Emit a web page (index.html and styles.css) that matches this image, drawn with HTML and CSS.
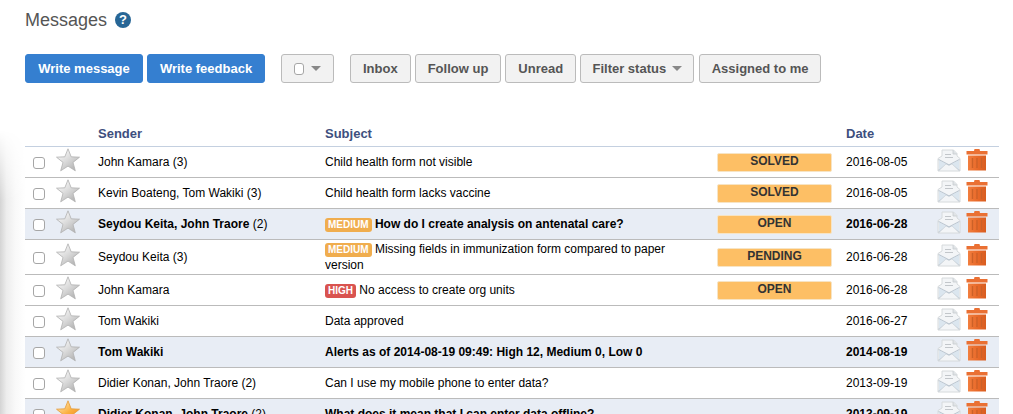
FILE: index.html
```html
<!DOCTYPE html>
<html lang="en">
<head>
  <meta charset="UTF-8" />
  <title>Messages</title>
  <link rel="stylesheet" href="styles.css">
</head>
<body>
  <svg class="defs" width="0" height="0">
    <defs>
      <linearGradient id="silver" x1="0.15" y1="0.1" x2="0.85" y2="0.95">
        <stop offset="0" stop-color="#fafafa"/>
        <stop offset="0.5" stop-color="#d8d8d8"/>
        <stop offset="1" stop-color="#b0b0b0"/>
      </linearGradient>
      <linearGradient id="gold" x1="0.15" y1="0.1" x2="0.85" y2="0.95">
        <stop offset="0" stop-color="#ffe2a8"/>
        <stop offset="0.5" stop-color="#fbb040"/>
        <stop offset="1" stop-color="#ee8a1c"/>
      </linearGradient>
      <linearGradient id="bin" x1="0" y1="0" x2="1" y2="0">
        <stop offset="0" stop-color="#f27f3f"/>
        <stop offset="0.5" stop-color="#e96a2a"/>
        <stop offset="1" stop-color="#d85d20"/>
      </linearGradient>
      <symbol id="star" viewBox="0 0 24 24">
        <path d="M12 .8l3.2 8 8.3.4-6.5 5.2 2.3 8.4L12 18.100l-7.300 4.700 2.300-8.400L.5 9.200l8.300-.4z"/>
      </symbol>
      <symbol id="mail" viewBox="0 0 24 23">
        <path d="M1 9.500L5 7V1h11.500L20 4.500V7l3 2.500V22H1z" fill="#f3f5f7" stroke="#d6dadc"/>
        <path d="M16 1v4h4" fill="#dfe3e6" stroke="#c6cbcf" stroke-width=".8"/>
        <path d="M8 5.500h6M8 8.500h8" stroke="#c2c6ca" stroke-width="1" fill="none"/>
        <path d="M1.500 10.500L12 16l10.500-5.500" fill="none" stroke="#bcc6cf" stroke-width="1.200"/>
        <path d="M1.500 21.500L9 14.200M22.500 21.500L15 14.200" fill="none" stroke="#c4ccd3" stroke-width="1.200"/>
        <path d="M2 11.200L9 14.700 2 20.800zM22 11.200L15 14.700l7 6.100z" fill="#dbe6ef"/>
      </symbol>
      <symbol id="trash" viewBox="0 0 22 22">
        <path d="M8.500 0h5l.5 2h7.500v3.500H.5V2H8z" fill="#ea7033"/>
        <path d="M2 6.500h18V21.500H2z" fill="url(#bin)"/>
        <path d="M6.500 9v10M11 9v10M15.500 9v10" stroke="#cc6128" stroke-width="1.400" fill="none"/>
      </symbol>
    </defs>
  </svg>

  <div class="side-shadow"></div>

  <div class="page">
    <h1 class="title">Messages <span class="help">?</span></h1>

    <div class="toolbar">
      <button class="btn btn-primary">Write message</button>
      <button class="btn btn-primary">Write feedback</button>
      <button class="btn btn-select"><span class="fake-check"></span><span class="caret"></span></button>
      <button class="btn">Inbox</button>
      <button class="btn">Follow up</button>
      <button class="btn">Unread</button>
      <button class="btn btn-filter">Filter status <span class="caret"></span></button>
      <button class="btn btn-last">Assigned to me</button>
    </div>

    <table class="messages">
      <colgroup>
        <col class="col-check"><col class="col-star"><col class="col-sender"><col class="col-subject"><col class="col-status"><col class="col-date"><col class="col-actions">
      </colgroup>
      <thead>
        <tr><th></th><th></th><th>Sender</th><th>Subject</th><th></th><th>Date</th><th></th></tr>
      </thead>
      <tbody>
        <tr>
          <td><span class="fake-check"></span></td>
          <td><svg class="star"><use href="#star"/></svg></td>
          <td>John Kamara (3)</td>
          <td>Child health form not visible</td>
          <td><div class="status">SOLVED</div></td>
          <td>2016-08-05</td>
          <td><div class="actions"><svg class="mail"><use href="#mail"/></svg><svg class="trash"><use href="#trash"/></svg></div></td>
        </tr>
        <tr>
          <td><span class="fake-check"></span></td>
          <td><svg class="star"><use href="#star"/></svg></td>
          <td>Kevin Boateng, Tom Wakiki (3)</td>
          <td>Child health form lacks vaccine</td>
          <td><div class="status">SOLVED</div></td>
          <td>2016-08-05</td>
          <td><div class="actions"><svg class="mail"><use href="#mail"/></svg><svg class="trash"><use href="#trash"/></svg></div></td>
        </tr>
        <tr class="unread">
          <td><span class="fake-check"></span></td>
          <td><svg class="star"><use href="#star"/></svg></td>
          <td><b>Seydou Keita, John Traore</b> (2)</td>
          <td><span class="prio prio-medium">MEDIUM</span> <b>How do I create analysis on antenatal care?</b></td>
          <td><div class="status">OPEN</div></td>
          <td><b>2016-06-28</b></td>
          <td><div class="actions"><svg class="mail"><use href="#mail"/></svg><svg class="trash"><use href="#trash"/></svg></div></td>
        </tr>
        <tr>
          <td><span class="fake-check"></span></td>
          <td><svg class="star"><use href="#star"/></svg></td>
          <td>Seydou Keita (3)</td>
          <td><span class="prio prio-medium">MEDIUM</span> Missing fields in immunization form compared to paper version</td>
          <td><div class="status">PENDING</div></td>
          <td>2016-06-28</td>
          <td><div class="actions"><svg class="mail"><use href="#mail"/></svg><svg class="trash"><use href="#trash"/></svg></div></td>
        </tr>
        <tr>
          <td><span class="fake-check"></span></td>
          <td><svg class="star"><use href="#star"/></svg></td>
          <td>John Kamara</td>
          <td><span class="prio prio-high">HIGH</span> No access to create org units</td>
          <td><div class="status">OPEN</div></td>
          <td>2016-06-28</td>
          <td><div class="actions"><svg class="mail"><use href="#mail"/></svg><svg class="trash"><use href="#trash"/></svg></div></td>
        </tr>
        <tr>
          <td><span class="fake-check"></span></td>
          <td><svg class="star"><use href="#star"/></svg></td>
          <td>Tom Wakiki</td>
          <td>Data approved</td>
          <td></td>
          <td>2016-06-27</td>
          <td><div class="actions"><svg class="mail"><use href="#mail"/></svg><svg class="trash"><use href="#trash"/></svg></div></td>
        </tr>
        <tr class="unread">
          <td><span class="fake-check"></span></td>
          <td><svg class="star"><use href="#star"/></svg></td>
          <td><b>Tom Wakiki</b></td>
          <td><b>Alerts as of 2014-08-19 09:49: High 12, Medium 0, Low 0</b></td>
          <td></td>
          <td><b>2014-08-19</b></td>
          <td><div class="actions"><svg class="mail"><use href="#mail"/></svg><svg class="trash"><use href="#trash"/></svg></div></td>
        </tr>
        <tr>
          <td><span class="fake-check"></span></td>
          <td><svg class="star"><use href="#star"/></svg></td>
          <td>Didier Konan, John Traore (2)</td>
          <td>Can I use my mobile phone to enter data?</td>
          <td></td>
          <td>2013-09-19</td>
          <td><div class="actions"><svg class="mail"><use href="#mail"/></svg><svg class="trash"><use href="#trash"/></svg></div></td>
        </tr>
        <tr class="unread">
          <td><span class="fake-check"></span></td>
          <td><svg class="star star-on"><use href="#star"/></svg></td>
          <td><b>Didier Konan, John Traore</b> (2)</td>
          <td><b>What does it mean that I can enter data offline?</b></td>
          <td></td>
          <td><b>2013-09-19</b></td>
          <td><div class="actions"><svg class="mail"><use href="#mail"/></svg><svg class="trash"><use href="#trash"/></svg></div></td>
        </tr>
      </tbody>
    </table>
  </div>
</body>
</html>
```

FILE: styles.css
```css
html, body {
  margin: 0;
  height: 414px;
  overflow: hidden;
}
body {
  position: relative;
  font-family: "Liberation Sans", Arial, sans-serif;
  font-size: 12px;
  color: #000;
  background-color: #fff;
}
.defs {
  display: block;
}
.side-shadow {
  position: absolute;
  left: 0;
  top: 130px;
  bottom: 0;
  width: 26px;
  background: linear-gradient(to right, #d4d4d4, #ededed 25%, #f9f9f9 60%, #fff);
  -webkit-mask-image: linear-gradient(to bottom, transparent, #000 70px);
  mask-image: linear-gradient(to bottom, transparent, #000 70px);
  pointer-events: none;
}
.page {
  position: relative;
  padding: 10px 14px 0 25px;
}
.title {
  display: flex;
  align-items: center;
  gap: 8px;
  margin: 0;
  height: 20px;
  font-size: 18px;
  font-weight: normal;
  color: #555;
}
.help {
  display: inline-block;
  width: 16px;
  height: 16px;
  line-height: 16px;
  border-radius: 50%;
  background: #276696;
  color: #fff;
  font-size: 13px;
  font-weight: bold;
  text-align: center;
}

.toolbar {
  display: flex;
  gap: 4px;
  margin-top: 24px;
}
.btn {
  height: 29px;
  padding: 0 12px;
  border: 1px solid #bbb;
  border-radius: 3px;
  background: #f2f2f2;
  color: #555;
  font-family: inherit;
  font-size: 13px;
  font-weight: bold;
  white-space: nowrap;
}
.btn-primary {
  width: 118px;
  padding: 0;
  border-color: #357fd0;
  background: #357fd0;
  color: #fff;
}
.btn-select {
  display: flex;
  align-items: center;
  gap: 5px;
  width: 53px;
  margin: 0 12px;
}
.btn-filter {
  width: 114px;
  margin-right: 1px;
  padding: 0;
}
.btn-last {
  width: 122px;
  padding: 0;
}
.caret {
  display: inline-block;
  width: 0;
  height: 0;
  margin-left: 2px;
  vertical-align: 2px;
  border-left: 5px solid transparent;
  border-right: 5px solid transparent;
  border-top: 5px solid #888;
}
.fake-check {
  display: block;
  box-sizing: border-box;
  width: 12px;
  height: 12px;
  border: 1px solid #a6a6a6;
  border-radius: 3px;
  background: #fff;
}

.messages {
  width: 974px;
  margin-top: 37px;
  table-layout: fixed;
  border-collapse: collapse;
}
.col-check { width: 30px; }
.col-star { width: 36px; }
.col-sender { width: 227px; }
.col-subject { width: 392px; }
.col-status { width: 129px; }
.col-date { width: 91px; }
.col-actions { width: 69px; }

.messages th {
  height: 26px;
  padding: 0 7px;
  border-bottom: 1px solid #c4d0e0;
  color: #3e4f7e;
  font-size: 13px;
  text-align: left;
}
.messages td {
  height: 31px;
  box-sizing: border-box;
  padding: 1px 7px;
  border-bottom: 1px solid #bbb;
  line-height: 16px;
  vertical-align: middle;
}
.messages td:first-child {
  padding: 1px 0 0 8px;
}
.messages td:nth-child(2) {
  padding: 0 0 5px 1px;
}
.messages td:nth-child(5) {
  padding: 1px 7px 0;
}
.messages td:last-child {
  padding: 0 0 4px 7px;
}
.unread td {
  background: #e8edf5;
}
.star {
  display: block;
  width: 24px;
  height: 24px;
  fill: url(#silver);
  stroke: #b0b0b0;
  stroke-width: 0.8;
}
.star-on {
  fill: url(#gold);
  stroke: #e39a3a;
}
.status {
  box-sizing: border-box;
  width: 115px;
  height: 19px;
  border: 1px solid #f7e4c4;
  border-radius: 2px;
  background: #fdbf65;
  color: #333;
  font-size: 12px;
  font-weight: bold;
  line-height: 15px;
  text-align: center;
}
.prio {
  display: inline-block;
  padding: 0 3px;
  height: 14px;
  border-radius: 3px;
  color: #fff;
  font-size: 10px;
  font-weight: bold;
  line-height: 14px;
}
.prio-medium { background: #f0ad4e; }
.prio-high { background: #d9534f; }
.actions {
  display: flex;
  gap: 5px;
  align-items: flex-start;
}
.mail {
  width: 24px;
  height: 23px;
}
.trash {
  width: 22px;
  height: 22px;
}
```
